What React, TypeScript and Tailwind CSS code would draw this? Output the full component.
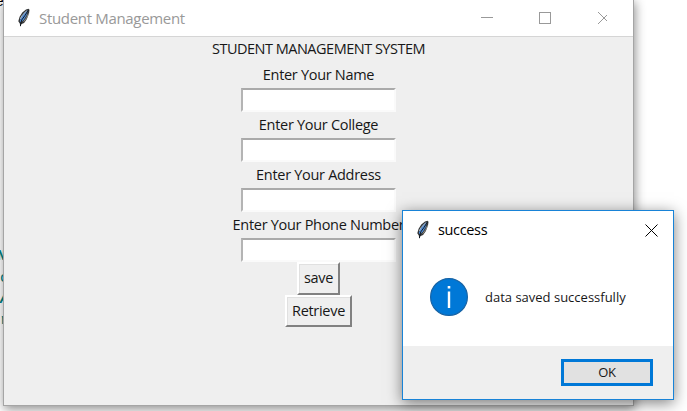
import React from "react";

const uiFont = "font-['Open_Sans','Noto_Sans',sans-serif]";

function Feather() {
  return (
    <svg width="14" height="20" viewBox="0 0 14 20" className="block shrink-0">
      <path d="M11.5.7 9 1.6 5.3 4.5 2.6 8.8 1.3 13.2l1.5 2.2.5 3.6.8-2.8 3-1.3 2.8-4L12 5.6l.5-3.8z" fill="#343637" />
      <path d="M11 1.8 7.2 4.7 4 9.3l-1.2 4 1.3 1L7 11.4 9.7 7z" fill="#4f8fdc" />
      <path d="M10 2.4 5 7.7 3.2 11" fill="none" stroke="#b0b2b3" strokeWidth="1" />
      <path d="M11.3 2 8.2 7.2 4.7 12 3.4 18" fill="none" stroke="#111820" strokeWidth="1" />
      <path d="M11.7 5.4 9.6 9.8 6.6 13.8" fill="none" stroke="#aaa69c" strokeWidth="0.8" />
    </svg>
  );
}

function Field({ label, tracking }: { label: string; tracking: string }) {
  return (
    <>
      <div className={`h-[26px] whitespace-nowrap text-[14.5px] leading-[26px] ${tracking}`}>{label}</div>
      <div className="h-6 w-[155px] border-2 border-b-[#fafafa] border-l-[#b4b4b4] border-r-[#fafafa] border-t-[#aaaaaa] bg-white" />
    </>
  );
}

function TkButton({ children, className }: { children: React.ReactNode; className: string }) {
  return (
    <button
      className={`flex items-center justify-center border-2 border-b-[#818181] border-l-white border-r-[#818181] border-t-white bg-[#efefef] text-[14.5px] leading-none shadow-[inset_1px_1px_0_#e0e0e0] ${className}`}
    >
      {children}
    </button>
  );
}

function EditorEdge() {
  return (
    <div className="absolute left-0 top-0 h-[411px] w-1 overflow-hidden font-['Liberation_Mono',monospace] text-[15px] leading-5">
      <span className="absolute -left-[5px] -top-[7px] text-black">e</span>
      <span className="absolute -left-[3px] top-[247px] font-bold text-[#008080]">N</span>
      <span className="absolute left-0 top-[269px] text-[#008080]">o</span>
      <span className="absolute left-0 top-[290px] font-bold italic text-[#008080]">A</span>
      <span className="absolute left-0 top-[311px] text-[#008080]">r</span>
    </div>
  );
}

export default function App() {
  return (
    <div className={`relative h-[411px] w-[687px] overflow-hidden bg-white text-[#171717] ${uiFont}`}>
      <EditorEdge />

      <section className="absolute -top-px left-[3px] flex h-[407px] w-[631px] flex-col border border-[#a5a5a5] bg-[#efefef] shadow-[1px_3px_10px_rgba(0,0,0,0.45)]">
        <header className="flex h-9 shrink-0 items-center bg-white pl-[13px] text-[#999999]">
          <Feather />
          <h1 className="ml-2 whitespace-nowrap text-[15px] font-normal leading-none tracking-[-0.32px]">Student Management</h1>
          <svg width="126" height="14" viewBox="0 0 126 14" className="ml-auto mr-[26px] block" fill="none" stroke="#999999" shapeRendering="crispEdges">
            <path d="M0 6.5h12M58.5 1.5h11v11h-11z" />
            <path d="m117 1 12 12m0-12-12 12" shapeRendering="auto" />
          </svg>
        </header>
        <main className="flex flex-1 flex-col items-center border-t border-[#d5d5d5]">
          <h2 className="h-[25px] whitespace-nowrap text-[14.5px] font-normal leading-[24px] tracking-[-0.5px]">STUDENT MANAGEMENT SYSTEM</h2>
          <Field label="Enter Your Name" tracking="tracking-[-0.3px]" />
          <Field label="Enter Your College" tracking="tracking-[-0.3px]" />
          <Field label="Enter Your Address" tracking="tracking-[-0.3px]" />
          <Field label="Enter Your Phone Number" tracking="tracking-[-0.3px]" />
          <TkButton className="h-[33px] w-[43px] tracking-[-0.3px]">save</TkButton>
          <TkButton className="h-8 w-[67px] tracking-[-0.3px]">Retrieve</TkButton>
        </main>
      </section>

      <section className="absolute left-[402px] top-[210px] flex h-[190px] w-[272px] flex-col border border-[#1883d7] bg-white shadow-[0_3px_14px_rgba(0,0,0,0.5)]">
        <header className="flex h-[38px] shrink-0 items-center pl-[13px] pr-[15px] text-black">
          <Feather />
          <h2 className="ml-2 text-[14.5px] font-normal leading-none tracking-[-0.35px]">success</h2>
          <svg width="13" height="13" viewBox="0 0 13 13" className="ml-auto block" stroke="black">
            <path d="m.5.5 12 12m0-12-12 12" />
          </svg>
        </header>
        <div className="flex flex-1 items-center pb-[1px] pl-[27px]">
          <svg width="38" height="38" viewBox="0 0 38 38" className="block shrink-0">
            <circle cx="19" cy="19" r="18.4" fill="#0078d7" stroke="#1763a5" strokeWidth="1.2" />
            <path d="M17.7 8h2.6v2.6h-2.6zM17.8 13.5h2.4V30h-2.4z" fill="white" />
          </svg>
          <p className="ml-[17px] whitespace-nowrap text-[13px] leading-none tracking-[0px]">data saved successfully</p>
        </div>
        <footer className="flex h-[53px] shrink-0 items-center justify-end bg-[#efefef] pr-5">
          <button className="flex h-[27px] w-[92px] items-center justify-center border-[3px] border-[#0078d7] bg-[#e1e1e1] text-[13px] leading-none tracking-[-0.3px]">OK</button>
        </footer>
      </section>
    </div>
  );
}
